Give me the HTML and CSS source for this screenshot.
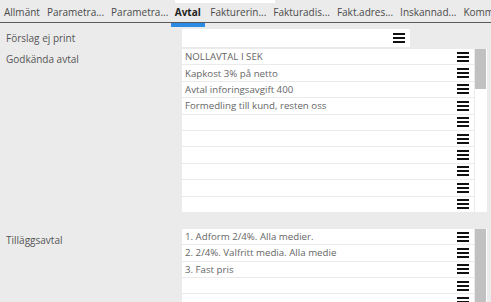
FILE: index.html
```html
<!DOCTYPE html>
<html lang="sv">
  <head>
    <meta charset="UTF-8" />
    <title>Avtal</title>
    <link rel="stylesheet" href="styles.css">
  </head>
  <body>
    <div class="top-strip"><div class="top-field"></div></div>

    <div class="tabs">
      <span class="tab">Allmänt</span>
      <span class="tab">Parametra...</span>
      <span class="tab">Parametra...</span>
      <span class="tab active">Avtal</span>
      <span class="tab">Fakturerin...</span>
      <span class="tab">Fakturadis...</span>
      <span class="tab">Fakt.adres...</span>
      <span class="tab">Inskannad...</span>
      <span class="tab">Kommentar</span>
    </div>

    <div class="form">
      <div class="label single-label">Förslag ej print</div>
      <div class="field single">
        <span></span>
        <svg class="menu" width="12" height="10" viewBox="0 0 12 10"><rect y="0" width="12" height="2"/><rect y="4" width="12" height="2"/><rect y="8" width="12" height="2"/></svg>
      </div>

      <div class="label">Godkända avtal</div>
      <div class="list">
        <div class="rows" id="approved"></div>
        <div class="scrollbar"><div class="thumb short"></div></div>
      </div>

      <div class="label second">Tilläggsavtal</div>
      <div class="list second">
        <div class="rows" id="extra"></div>
        <div class="scrollbar"><div class="thumb long"></div></div>
      </div>
    </div>

    <script>
      const icon = '<svg class="menu" width="12" height="10" viewBox="0 0 12 10"><rect y="0" width="12" height="2"/><rect y="4" width="12" height="2"/><rect y="8" width="12" height="2"/></svg>';

      function fill(id, items, count) {
        const el = document.getElementById(id);
        for (let i = 0; i < count; i++) {
          const row = document.createElement("div");
          row.className = "row";
          row.innerHTML = `<span>${items[i] || ""}</span>${icon}`;
          el.appendChild(row);
        }
      }

      fill("approved", [
        "NOLLAVTAL I SEK",
        "Kapkost 3% på netto",
        "Avtal inforingsavgift 400",
        "Formedling till kund, resten oss"
      ], 10);

      fill("extra", [
        "1. Adform 2/4%. Alla medier.",
        "2. 2/4%. Valfritt media. Alla medie",
        "3. Fast pris"
      ], 6);
    </script>
  </body>
</html>
```

FILE: styles.css
```css
* {
  box-sizing: border-box;
  margin: 0;
  padding: 0;
}

body {
  background: #ebebeb;
  font-family: "Open Sans", "Liberation Sans", sans-serif;
  color: #555;
  width: 491px;
  height: 302px;
  overflow: hidden;
}

.top-strip {
  height: 3px;
  padding-left: 175px;
}

.top-field {
  width: 100px;
  height: 3px;
  background: #fff;
}

.tabs {
  display: flex;
  height: 20px;
  padding-left: 0.5px;
  border-bottom: 1px solid #5a5a5a;
  white-space: nowrap;
}

.tab {
  position: relative;
  padding: 0 3.5px;
  font-size: 10px;
  line-height: 19px;
  color: #4a4a4a;
}

.tab.active {
  padding: 0 6px 0 3px;
  font-weight: 700;
  color: #222;
}

.tab.active::after {
  content: "";
  position: absolute;
  left: -1px;
  right: 2px;
  bottom: -5px;
  height: 4px;
  background: #2b8be2;
}

.form {
  display: grid;
  grid-template-columns: 182px auto;
  row-gap: 2px;
  padding-top: 6px;
}

.label {
  padding: 3px 0 0 6px;
  font-size: 10px;
  line-height: 14px;
  color: #555;
}

.label.single-label {
  padding-top: 2px;
}

.label.second {
  margin-top: 15px;
  padding-top: 4px;
}

.field.single {
  width: 228px;
  height: 18px;
  background: #fff;
  display: flex;
  justify-content: space-between;
  align-items: center;
  padding-right: 5px;
}

.menu {
  fill: #111;
  flex: none;
}

.list {
  display: flex;
  gap: 1px;
  width: 305px;
}

.list.second {
  margin-top: 15px;
}

.rows {
  width: 292px;
  display: flex;
  flex-direction: column;
  gap: 1px;
}

.row {
  height: 15.4px;
  flex: none;
  background: #fff;
  display: flex;
  justify-content: space-between;
  align-items: center;
  padding: 0 5px 0 3px;
  font-size: 9.7px;
  color: #666;
}

.scrollbar {
  width: 12px;
  background: #fff;
}

.thumb {
  width: 11px;
  background: #c1c1c1;
}

.thumb.short {
  height: 40px;
}

.thumb.long {
  height: 80px;
}
```
